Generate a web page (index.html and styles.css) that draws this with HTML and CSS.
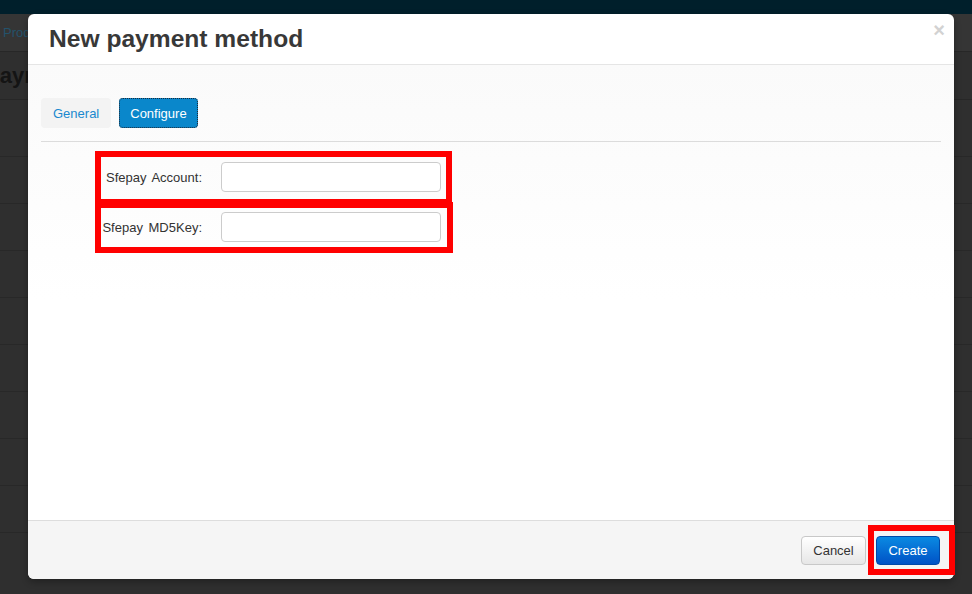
FILE: index.html
```html
<!DOCTYPE html>
<html>
<head>
<meta charset="utf-8">
<title>New payment method</title>
<link rel="stylesheet" href="styles.css">
</head>
<body>
<div class="page">
  <div class="topbar"></div>
  <div class="crumbs">Products</div>
  <h1 class="page-title">Payment</h1>
  <div class="rows">
    <div class="row first"></div>
    <div class="row"></div>
    <div class="row"></div>
    <div class="row"></div>
    <div class="row"></div>
    <div class="row"></div>
    <div class="row"></div>
    <div class="row"></div>
    <div class="row"></div>
  </div>
</div>

<div class="modal">
  <div class="modal-header">
    <h3 class="modal-title">New payment method</h3>
    <span class="close">×</span>
  </div>
  <div class="modal-body">
    <div class="tabs">
      <button class="tab">General</button>
      <button class="tab active">Configure</button>
    </div>
    <div class="tab-pane">
      <div class="field mark-a">
        <label class="field-label">Sfepay Account:</label>
        <input class="field-input" type="text">
      </div>
      <div class="field mark-b">
        <label class="field-label">Sfepay MD5Key:</label>
        <input class="field-input" type="text">
      </div>
    </div>
  </div>
  <div class="modal-footer">
    <button class="btn btn-default">Cancel</button>
    <span class="mark-c"><button class="btn btn-primary">Create</button></span>
  </div>
</div>
</body>
</html>
```

FILE: styles.css
```css
*, *::before, *::after { box-sizing: border-box; }
html, body { margin: 0; height: 100%; }
body {
  background: #2f2f2f;
  font-family: "Liberation Sans", Arial, sans-serif;
  overflow: hidden;
  position: relative;
}

.topbar { height: 14px; background: #001f2b; }
.crumbs {
  height: 38px;
  line-height: 37px;
  padding-left: 3px;
  font-size: 13px;
  color: #24526b;
  background: #353535;
  border-bottom: 1px solid #272727;
  white-space: nowrap;
}
.page-title {
  margin: 0;
  height: 48px;
  line-height: 48px;
  font-size: 22px;
  font-weight: bold;
  color: #141414;
  text-indent: -15px;
  border-bottom: 1px solid #272727;
  white-space: nowrap;
}
.row { height: 47px; border-bottom: 1px solid #282828; }
.row.first { height: 57px; }

.modal {
  position: absolute;
  left: 28px;
  top: 14px;
  width: 926px;
  height: 565px;
  background: #fff;
  border-radius: 6px;
  box-shadow: 0 3px 7px rgba(0,0,0,0.3);
  display: flex;
  flex-direction: column;
}
.modal-header {
  height: 51px;
  flex: none;
  display: flex;
  justify-content: space-between;
  align-items: center;
  padding: 0 9px 0 21px;
  border-bottom: 1px solid #e5e5e5;
}
.modal-title {
  margin: 0;
  font-size: 24.6px;
  font-weight: bold;
  color: #383838;
}
.close {
  align-self: flex-start;
  margin-top: 6px;
  font-size: 20px;
  line-height: 20px;
  font-weight: bold;
  color: #d2d2d2;
}

.modal-body {
  flex: 1;
  padding: 33px 13px 0;
  background: linear-gradient(#fafafa, #fff 235px);
}
.tabs { display: flex; gap: 8px; }
.tab {
  height: 30px;
  padding: 0 12px;
  font-family: inherit;
  font-size: 13px;
  border: none;
  border-radius: 4px;
  background: #f3f3f3;
  color: #1a89cf;
}
.tab.active {
  background: #0a87cb;
  color: #fff;
  padding: 0 11px;
  outline: 1px dotted #1b2a3a;
  outline-offset: -1px;
}
.tab-pane {
  margin-top: 13px;
  border-top: 1px solid #dcdcdc;
  padding-top: 20px;
}
.field {
  position: relative;
  display: flex;
  align-items: center;
  height: 30px;
  margin-bottom: 20px;
}
.field-label {
  width: 161px;
  text-align: right;
  font-size: 13px;
  color: #333;
  word-spacing: 2px;
}
.field-input {
  margin-left: 19px;
  width: 220px;
  height: 30px;
  border: 1px solid #ccc;
  border-radius: 4px;
  background: #fff;
}
.mark-a::after, .mark-b::after, .mark-c::after {
  content: "";
  position: absolute;
  border: 6px solid #ff0000;
  pointer-events: none;
}
.mark-a::after { left: 54px; top: -11px; width: 357px; height: 54px; }
.mark-b::after { left: 54px; top: -10px; width: 358px; height: 51px; }

.modal-footer {
  height: 59px;
  flex: none;
  display: flex;
  justify-content: flex-end;
  align-items: center;
  gap: 10px;
  padding: 0 14px;
  background: #f5f5f5;
  border-top: 1px solid #ddd;
  border-radius: 0 0 6px 6px;
}
.mark-c { position: relative; display: flex; }
.mark-c::after { left: -8px; top: -11px; right: -15px; bottom: -10px; }
.btn {
  height: 29px;
  font-family: inherit;
  font-size: 13px;
  border-radius: 4px;
  padding: 0;
}
.btn-default {
  width: 65px;
  color: #333;
  background: linear-gradient(#ffffff, #e6e6e6);
  border: 1px solid #c8c8c8;
}
.btn-primary {
  width: 64px;
  color: #fff;
  background: linear-gradient(#0a8ae2, #0052c6);
  border: 1px solid #0049a8;
}
```
